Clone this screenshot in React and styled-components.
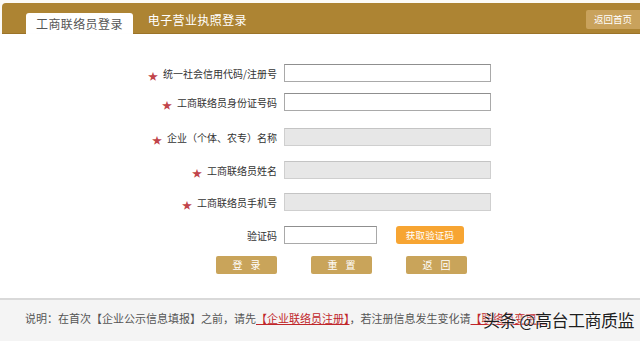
import React from 'react';
import styled, { createGlobalStyle } from 'styled-components';

const GlobalStyle = createGlobalStyle`
  html, body {
    margin: 0;
    padding: 0;
    background: #fff;
  }
  body {
    font-family: "Noto Sans CJK SC", "Liberation Sans", sans-serif;
    color: #333;
  }
`;

const Page = styled.div`
  width: 640px;
  height: 341px;
  overflow: hidden;
  display: flex;
  flex-direction: column;
  padding-top: 3px;
  box-sizing: border-box;
  background: #fbfaf7;
`;

const TopBar = styled.div`
  height: 31px;
  margin-left: 2px;
  background: #ad8433;
  border-radius: 4px 0 0 0;
  display: flex;
  align-items: flex-end;
  padding-left: 24px;
  border-bottom: 1px solid #9c7429;
  box-sizing: border-box;
`;

const Tab = styled.div`
  height: ${p => (p.active ? '21px' : '24px')};
  padding: 0 ${p => (p.active ? '10px' : '12px')};
  margin-right: ${p => (p.active ? '3px' : '0')};
  background: ${p => (p.active ? '#fff' : 'transparent')};
  color: ${p => (p.active ? '#555' : '#fff')};
  border-radius: 3px 3px 0 0;
  font-size: 12px;
  line-height: ${p => (p.active ? '22px' : '20px')};
  letter-spacing: 0.4px;
  margin-bottom: -1px;
`;

const HomeButton = styled.div`
  margin-left: auto;
  align-self: center;
  margin-top: 3px;
  width: 54px;
  height: 19px;
  background: #c9a25c;
  border-radius: 2px 0 0 2px;
  color: #fff;
  font-size: 9.5px;
  line-height: 19px;
  text-align: center;
`;

const Content = styled.div`
  background: #fff;
  height: 266px;
  padding-top: 30px;
  box-sizing: border-box;
  border-bottom: 2px solid #d9d9d9;
  box-shadow: 0 1px 2px rgba(0, 0, 0, 0.08);
`;

const Row = styled.div`
  display: grid;
  grid-template-columns: 277px auto;
  column-gap: 7px;
  align-items: center;
  margin-bottom: ${p => p.gap}px;
`;

const Label = styled.div`
  text-align: right;
  font-size: 10px;
  color: #333;
  white-space: nowrap;
`;

const Star = styled.span`
  color: #c1444a;
  font-size: 10px;
  margin-right: 5px;
  position: relative;
  top: 2px;
`;

const Field = styled.div`
  width: ${p => (p.short ? '93px' : '207px')};
  height: 18px;
  box-sizing: border-box;
  border: 1px solid ${p => (p.disabled ? '#cfcfcf' : '#a9a9a9')};
  border-top-color: ${p => (p.disabled ? '#c4c4c4' : '#8f8f8f')};
  background: ${p => (p.disabled ? '#e7e7e7' : '#fff')};
`;

const CodeGroup = styled.div`
  display: flex;
  align-items: center;
  gap: 19px;
`;

const CodeButton = styled.div`
  width: 68px;
  height: 18px;
  background: #f7a532;
  border-radius: 3px;
  color: #fff;
  font-size: 9.5px;
  line-height: 18px;
  text-align: center;
  letter-spacing: 0.2px;
`;

const Actions = styled.div`
  display: flex;
  padding-left: 216px;
  gap: 34px;
  margin-top: 12px;
`;

const ActionButton = styled.div`
  width: 61px;
  height: 18px;
  background: #c9a45a;
  border-radius: 2px;
  color: #fff;
  font-size: 10px;
  line-height: 18px;
  text-align: center;
  letter-spacing: 8px;
  text-indent: 8px;
`;

const Footer = styled.div`
  position: relative;
  flex: 1;
  background: #f4f4f4;
  padding: 10px 0 0 25px;
  font-size: 11px;
  color: #555;
  white-space: nowrap;
`;

const RedLink = styled.span`
  color: #c0262a;
  text-decoration: underline;
`;

const Watermark = styled.div`
  position: absolute;
  left: 483px;
  top: 7px;
  font-size: 17px;
  color: #1e1e1e;
  text-shadow: 0 0 2px #fff, 0 0 2px #fff;
  letter-spacing: -0.5px;
`;

const rows = [
  { label: '统一社会信用代码/注册号', gap: 11 },
  { label: '工商联络员身份证号码', gap: 17 },
  { label: '企业（个体、农专）名称', disabled: true, gap: 15 },
  { label: '工商联络员姓名', disabled: true, gap: 14 },
  { label: '工商联络员手机号', disabled: true, gap: 15 },
];

export default function App() {
  return (
    <>
      <GlobalStyle />
      <Page>
        <TopBar>
          <Tab active>工商联络员登录</Tab>
          <Tab>电子营业执照登录</Tab>
          <HomeButton>返回首页</HomeButton>
        </TopBar>
        <Content>
          {rows.map(r => (
            <Row key={r.label} gap={r.gap}>
              <Label>
                <Star>★</Star>
                {r.label}
              </Label>
              <Field disabled={r.disabled} />
            </Row>
          ))}
          <Row gap={0}>
            <Label>验证码</Label>
            <CodeGroup>
              <Field short />
              <CodeButton>获取验证码</CodeButton>
            </CodeGroup>
          </Row>
          <Actions>
            <ActionButton>登录</ActionButton>
            <ActionButton>重置</ActionButton>
            <ActionButton>返回</ActionButton>
          </Actions>
        </Content>
        <Footer>
          说明：在首次【企业公示信息填报】之前，请先<RedLink>【企业联络员注册】</RedLink>，若注册信息发生变化请
          <RedLink>【联络员变更】</RedLink>
          <Watermark>头条 @高台工商质监</Watermark>
        </Footer>
      </Page>
    </>
  );
}
